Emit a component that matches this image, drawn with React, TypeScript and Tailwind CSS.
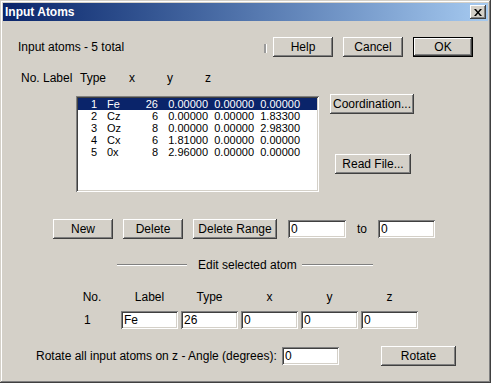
import React from 'react';

const raised =
  'shadow-[inset_-1px_-1px_#404040,inset_1px_1px_#ffffff,inset_-2px_-2px_#808080,inset_2px_2px_#d4d0c8]';
const sunken =
  'shadow-[inset_1px_1px_#808080,inset_-1px_-1px_#ffffff,inset_2px_2px_#404040,inset_-2px_-2px_#d4d0c8]';

interface Atom {
  no: number;
  label: string;
  type: number;
  x: string;
  y: string;
  z: string;
}

const atoms: Atom[] = [
  { no: 1, label: 'Fe', type: 26, x: '0.00000', y: '0.00000', z: '0.00000' },
  { no: 2, label: 'Cz', type: 6, x: '0.00000', y: '0.00000', z: '1.83300' },
  { no: 3, label: 'Oz', type: 8, x: '0.00000', y: '0.00000', z: '2.98300' },
  { no: 4, label: 'Cx', type: 6, x: '1.81000', y: '0.00000', z: '0.00000' },
  { no: 5, label: '0x', type: 8, x: '2.96000', y: '0.00000', z: '0.00000' },
];

const Button: React.FC<{ label: string; w: string; className?: string; isDefault?: boolean }> = ({
  label,
  w,
  className = '',
  isDefault = false,
}) =>
  isDefault ? (
    <div className={`${w} h-[20px] border border-black ${className}`}>
      <div className={`w-full h-full ${raised} flex items-center justify-center`}>{label}</div>
    </div>
  ) : (
    <div className={`${w} h-[20px] ${raised} flex items-center justify-center ${className}`}>{label}</div>
  );

const Field: React.FC<{ value: string; w: string; h?: string; className?: string }> = ({
  value,
  w,
  h = 'h-[18px]',
  className = '',
}) => (
  <div className={`${w} ${h} bg-white ${sunken} flex items-center pl-[3px] ${className}`}>{value}</div>
);

export default function App() {
  return (
    <div className="w-[491px] h-[383px] bg-[#d4d0c8] text-black text-[12px] leading-[14px] font-['Liberation_Sans',Arial,sans-serif] shadow-[inset_-1px_-1px_#404040,inset_1px_1px_#d4d0c8,inset_-2px_-2px_#808080,inset_2px_2px_#ffffff] overflow-hidden">
      {/* title bar */}
      <div className="px-[3px] pt-[3px]">
        <div className="h-[18px] bg-gradient-to-r from-[#0a246a] to-[#a6caf0] flex items-center justify-between pl-[2px] pr-[2px]">
          <span className="text-white font-bold text-[12px]">Input Atoms</span>
          <div className={`w-[16px] h-[14px] bg-[#d4d0c8] ${raised} flex items-center justify-center`}>
            <svg width="8" height="7" viewBox="0 0 8 7">
              <path d="M0 0h2l2 2.5L6 0h2L5 3.5 8 7H6L4 4.5 2 7H0l3-3.5z" fill="black" />
            </svg>
          </div>
        </div>
      </div>

      {/* top row */}
      <div className="flex items-center h-[20px] mt-[16px]">
        <span className="ml-[18px] w-[246px]">Input atoms - 5 total</span>
        <div className="w-[3px] h-[9px] bg-[#9a9a9a] border-r border-white mt-[2px]" />
        <Button label="Help" w="w-[60px]" className="ml-[6px]" />
        <Button label="Cancel" w="w-[60px]" className="ml-[10px]" />
        <Button label="OK" w="w-[60px]" className="ml-[10px]" isDefault />
      </div>

      {/* list header */}
      <div className="flex h-[14px] mt-[14px]">
        <span className="ml-[21px] w-[22px]">No.</span>
        <span className="w-[37px]">Label</span>
        <span className="w-[49px]">Type</span>
        <span className="w-[38px]">x</span>
        <span className="w-[38px]">y</span>
        <span>z</span>
      </div>

      {/* list + side buttons */}
      <div className="flex items-start mt-[9px]">
        <div className={`ml-[76px] mt-[2px] w-[243px] h-[96px] bg-white ${sunken} p-[2px] text-[11px] leading-[12px]`}>
          {atoms.map((a, i) => (
            <div
              key={a.no}
              className={`flex h-[12px] ${i === 0 ? 'bg-[#0a246a] text-white' : ''}`}
            >
              <span className="w-[19px] text-right">{a.no}</span>
              <span className="ml-[10px] w-[30px]">{a.label}</span>
              <span className="w-[21px] text-right">{a.type}</span>
              <span className="w-[50px] text-right">{a.x}</span>
              <span className="w-[46px] text-right">{a.y}</span>
              <span className="w-[46px] text-right">{a.z}</span>
            </div>
          ))}
        </div>
        <div className="ml-[11px] flex flex-col">
          <Button label="Coordination..." w="w-[84px]" />
          <Button label="Read File..." w="w-[76px]" className="ml-[5px] mt-[40px]" />
        </div>
      </div>

      {/* new / delete row */}
      <div className="flex items-center h-[20px] mt-[27px]">
        <Button label="New" w="w-[60px]" className="ml-[53px]" />
        <Button label="Delete" w="w-[60px]" className="ml-[10px]" />
        <Button label="Delete Range" w="w-[84px]" className="ml-[10px]" />
        <Field value="0" w="w-[58px]" className="ml-[11px]" />
        <span className="w-[32px] pl-[11px]">to</span>
        <Field value="0" w="w-[57px]" />
      </div>

      {/* separator */}
      <div className="flex items-center h-[12px] mt-[20px]">
        <div className="ml-[117px] w-[70px] border-t border-[#808080] border-b border-b-white" />
        <span className="ml-[11px] w-[104px] whitespace-nowrap">Edit selected atom</span>
        <div className="w-[71px] border-t border-[#808080] border-b border-b-white" />
      </div>

      {/* edit header */}
      <div className="flex h-[14px] mt-[19px]">
        <span className="ml-[82px] w-[20px] text-center">No.</span>
        <div className="ml-[19px] flex gap-[3px]">
          {['Label', 'Type', 'x', 'y', 'z'].map((h) => (
            <span key={h} className="w-[57px] text-center">
              {h}
            </span>
          ))}
        </div>
      </div>

      {/* edit fields */}
      <div className="flex items-center h-[18px] mt-[7px]">
        <span className="ml-[84px] w-[37px]">1</span>
        <div className="flex gap-[3px]">
          {['Fe', '26', '0', '0', '0'].map((v, i) => (
            <Field key={i} value={v} w="w-[57px]" h="h-[18px]" />
          ))}
        </div>
      </div>

      {/* rotate row */}
      <div className="flex items-center h-[20px] mt-[17px]">
        <span className="ml-[36px] w-[246px]">Rotate all input atoms on z - Angle (degrees):</span>
        <Field value="0" w="w-[57px]" />
        <Button label="Rotate" w="w-[75px]" className="ml-[42px]" />
      </div>
    </div>
  );
}
